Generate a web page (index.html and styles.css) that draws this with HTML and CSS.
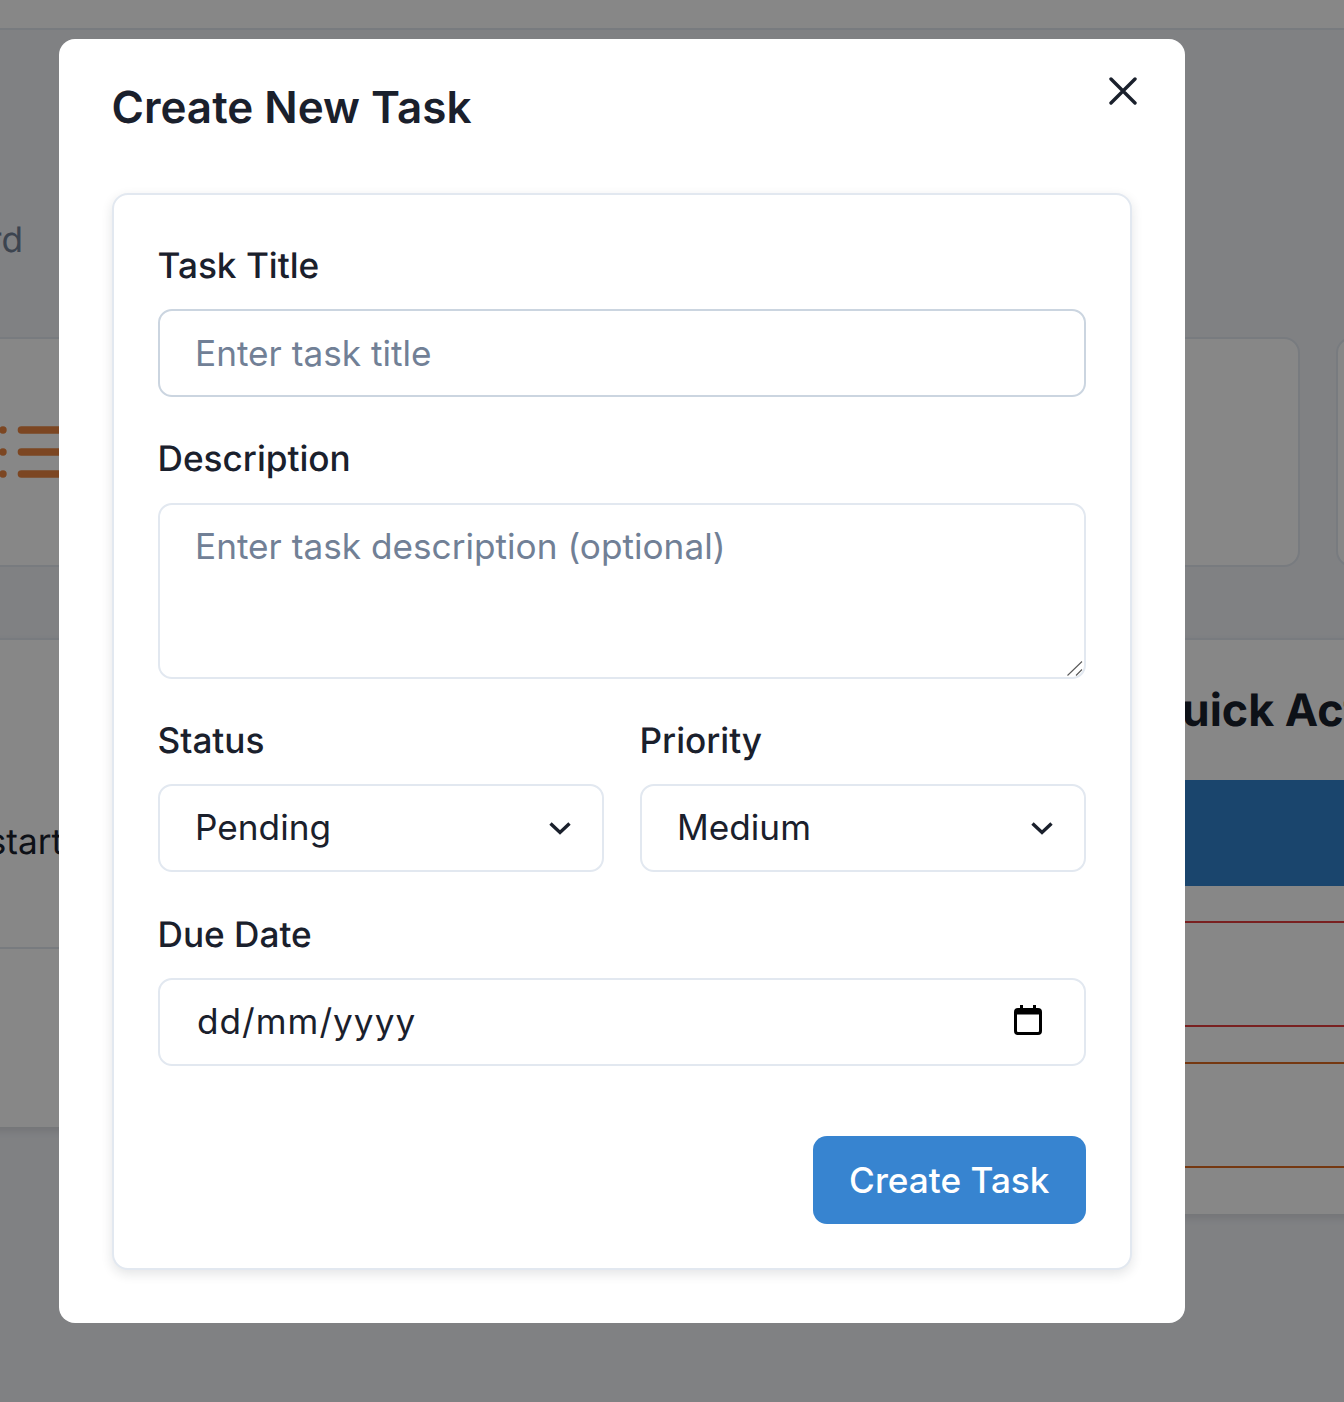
FILE: index.html
```html
<!DOCTYPE html>
<html lang="en">
<head>
<meta charset="utf-8">
<title>Create New Task</title>
<link rel="stylesheet" href="styles.css">
</head>
<body>
<div class="app">
  <header class="topbar"></header>
  <main class="main">
    <div class="intro"><p class="intro-text">Overview of your task dashboard</p></div>
    <section class="stats">
      <article class="stat">
        <svg class="stat-icon" viewBox="0 0 24 24" fill="none" stroke="currentColor" stroke-width="2" stroke-linecap="round"><path d="M8 6h13M8 12h13M8 18h13M3 6h.01M3 12h.01M3 18h.01"/></svg>
      </article>
      <article class="stat"></article>
      <article class="stat"></article>
    </section>
    <section class="panels">
      <div class="panel panel-left">
        <div class="panel-top"><p class="empty-text">Add a task to start</p></div>
        <div class="panel-bottom"></div>
      </div>
      <div class="panel panel-right">
        <h2 class="panel-title">Quick Actions</h2>
        <div class="actions">
          <div class="action action-primary"></div>
          <div class="action action-danger"></div>
          <div class="action action-warn"></div>
        </div>
      </div>
    </section>
  </main>
</div>

<div class="overlay">
  <div class="modal">
    <button class="close" type="button" aria-label="Close">
      <svg viewBox="0 0 28 28" fill="none" stroke="currentColor" stroke-width="3.4" stroke-linecap="round"><path d="M2 2l24 24M26 2L2 26"/></svg>
    </button>
    <h1 class="modal-title">Create New Task</h1>
    <form class="card">
      <div class="field">
        <label class="label label-first" for="title">Task Title</label>
        <input class="control control-focus" id="title" type="text" placeholder="Enter task title">
      </div>
      <div class="field">
        <label class="label" for="desc">Description</label>
        <div class="control-wrap">
          <textarea class="control control-area" id="desc" placeholder="Enter task description (optional)"></textarea>
          <svg class="grip" viewBox="0 0 16 15" fill="none" stroke="#5a5a5a" stroke-width="1.1"><path d="M0.5 14.5L15 0.5M9 14.5L15 8.5"/></svg>
        </div>
      </div>
      <div class="row">
        <div class="field-col">
          <label class="label label-row" for="status">Status</label>
          <div class="control-wrap">
            <select class="control control-select" id="status"><option>Pending</option></select>
            <svg class="chevron" viewBox="0 0 24 14" fill="none" stroke="currentColor" stroke-width="3.4"><path d="M2.5 2.5l9.5 9 9.5-9"/></svg>
          </div>
        </div>
        <div class="field-col">
          <label class="label label-row" for="priority">Priority</label>
          <div class="control-wrap">
            <select class="control control-select" id="priority"><option>Medium</option></select>
            <svg class="chevron" viewBox="0 0 24 14" fill="none" stroke="currentColor" stroke-width="3.4"><path d="M2.5 2.5l9.5 9 9.5-9"/></svg>
          </div>
        </div>
      </div>
      <div class="field">
        <label class="label label-first" for="due">Due Date</label>
        <div class="control-wrap">
          <input class="control control-date" id="due" type="text" value="dd/mm/yyyy">
          <svg class="calendar" viewBox="0 0 28 30"><path fill-rule="evenodd" d="M6 0h3v3h10V0h3v3h2a4 4 0 0 1 4 4v19a4 4 0 0 1-4 4H4a4 4 0 0 1-4-4V7a4 4 0 0 1 4-4h2zM3 9.5V26a1 1 0 0 0 1 1h20a1 1 0 0 0 1-1V9.5z"/></svg>
        </div>
      </div>
      <div class="form-actions">
        <button class="submit" type="button">Create Task</button>
      </div>
    </form>
  </div>
</div>
</body>
</html>
```

FILE: styles.css
```css
* { box-sizing: border-box; }

html, body {
  margin: 0;
  height: 100%;
  overflow: hidden;
  font-family: Inter, "Liberation Sans", sans-serif;
  color: #1a202c;
  text-rendering: geometricPrecision;
}

/* Background dashboard */
.app {
  height: 1402px;
  overflow: hidden;
  background: #f1f3f8;
}

.topbar {
  height: 30px;
  background: #fff;
  border-bottom: 2px solid #e2e8f0;
}

.main {
  margin-left: -300px;
  width: 2418px;
}

.intro {
  height: 307px;
  padding-top: 188px;
}

.intro-text {
  margin: 0;
  width: 323px;
  font-size: 35.2px;
  line-height: 44px;
  text-align: right;
  white-space: nowrap;
  color: #718096;
  direction: rtl;
}

.stats {
  display: grid;
  grid-template-columns: repeat(3, 782px);
  gap: 36px;
}

.stat {
  height: 230px;
  display: flex;
  align-items: center;
  padding-left: 290px;
  background: #fff;
  border: 2px solid #e2e8f0;
  border-radius: 16px;
}

.stat-icon {
  width: 88px;
  height: 88px;
  color: #ea8540;
}

.panels {
  margin-top: 71px;
  display: grid;
  grid-template-columns: 1100px 1200px;
  gap: 36px;
  align-items: start;
}

.panel {
  background: #fff;
  border-top: 2px solid #e2e8f0;
  box-shadow: 0 4px 8px rgba(0, 0, 0, 0.1);
}

.panel-top {
  height: 309px;
  padding-top: 180px;
  border-bottom: 2px solid #e2e8f0;
}

.empty-text {
  margin: 0;
  width: 363px;
  font-size: 35.2px;
  line-height: 44px;
  text-align: right;
  white-space: nowrap;
  direction: rtl;
}

.panel-bottom {
  height: 178px;
}

.panel-right {
  padding: 42px 46px 46px 46px;
}

.panel-title {
  margin: 0;
  padding-left: 265px;
  font-size: 44.8px;
  line-height: 56px;
  font-weight: 700;
}

.actions {
  margin-top: 42px;
  display: flex;
  flex-direction: column;
  gap: 35px;
}

.action {
  height: 106px;
  border-radius: 12px;
}

.action-primary { background: #3182ce; }

.action-danger {
  height: 106px;
  border: 2px solid #e53e3e;
}

.action-warn {
  height: 106px;
  border: 2px solid #dd6b20;
}

/* Modal */
.overlay {
  position: fixed;
  inset: 0;
  padding: 39px 0 0 59px;
  background: rgba(0, 0, 0, 0.47);
}

.modal {
  position: relative;
  width: 1126px;
  height: 1284px;
  padding: 42px 53px 0;
  background: #fff;
  border-radius: 16px;
}

.close {
  position: absolute;
  top: 38px;
  right: 48px;
  width: 28px;
  height: 28px;
  padding: 0;
  border: 0;
  background: none;
  color: #1a202c;
}

.close svg {
  display: block;
  width: 28px;
  height: 28px;
}

.modal-title {
  margin: 0 0 0 -0.5px;
  font-size: 44px;
  line-height: 52px;
  font-weight: 600;
  color: #1a202c;
}

.card {
  margin-top: 60px;
  height: 1077px;
  padding: 44px 44px 0;
  background: #fff;
  border: 2px solid #e2e8f0;
  border-radius: 16px;
  box-shadow: 0 4px 12px rgba(26, 32, 44, 0.12);
}

.field { margin-bottom: 36px; }

.label {
  display: block;
  padding-top: 4px;
  margin: 0 0 22px -0.5px;
  font-size: 35.2px;
  line-height: 44px;
  font-weight: 500;
  color: #1a202c;
}

.label-first {
  padding-top: 5px;
  margin-bottom: 21px;
}

.label-row { margin-bottom: 21px; }

.control {
  display: block;
  width: 100%;
  height: 88px;
  padding: 0 36px 0 35px;
  background: #fff;
  border: 2px solid #e2e8f0;
  border-radius: 14px;
  outline: none;
  font-family: inherit;
  font-size: 35.2px;
  color: #1a202c;
}

.control::placeholder {
  color: #718096;
  opacity: 1;
}

.control-focus { border-color: #cbd5e0; }

.control-area {
  height: 176px;
  padding-top: 19px;
  line-height: 44px;
  resize: none;
}

.control-select {
  appearance: none;
  padding-bottom: 2px;
}

.control-date {
  padding-left: 37px;
  padding-bottom: 2px;
  letter-spacing: 1px;
}

.row {
  display: grid;
  grid-template-columns: 1fr 1fr;
  gap: 36px;
  margin-bottom: 36px;
}

.control-wrap { position: relative; }

.grip {
  position: absolute;
  right: 3px;
  bottom: 3px;
  width: 16px;
  height: 15px;
  pointer-events: none;
}

.chevron {
  position: absolute;
  top: 37px;
  right: 32px;
  width: 24px;
  height: 14px;
  color: #1a202c;
  pointer-events: none;
}

.calendar {
  position: absolute;
  top: 27px;
  right: 44px;
  width: 28px;
  height: 30px;
  fill: #000;
  pointer-events: none;
}

.form-actions {
  display: flex;
  justify-content: flex-end;
  margin-top: 70px;
}

.submit {
  height: 88px;
  padding: 0 36.5px;
  background: #3784d0;
  border: 0;
  border-radius: 14px;
  font-family: inherit;
  font-size: 35.2px;
  font-weight: 500;
  color: #fff;
}
```
